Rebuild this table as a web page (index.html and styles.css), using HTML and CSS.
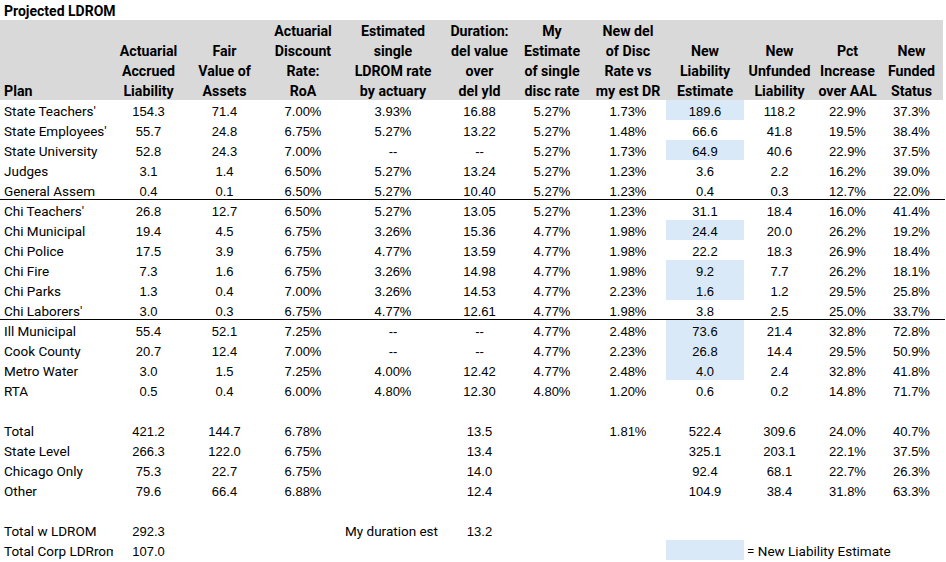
FILE: index.html
```html
<!DOCTYPE html>
<html lang="en">
<head>
<meta charset="utf-8">
<title>Projected LDROM</title>
<link rel="stylesheet" href="styles.css">
</head>
<body>
<div class="sheet">
  <div class="row"><div class="title">Projected LDROM</div></div>

  <div class="row head">
    <div class="h left"><div>Plan</div></div>
    <div class="h"><div>Actuarial<br>Accrued<br>Liability</div></div>
    <div class="h"><div>Fair<br>Value of<br>Assets</div></div>
    <div class="h"><div>Actuarial<br>Discount<br>Rate:<br>RoA</div></div>
    <div class="h"><div>Estimated<br>single<br>LDROM rate<br>by actuary</div></div>
    <div class="h"><div>Duration:<br>del value<br>over<br>del yld</div></div>
    <div class="h"><div>My<br>Estimate<br>of single<br>disc rate</div></div>
    <div class="h"><div>New del<br>of Disc<br>Rate vs<br>my est DR</div></div>
    <div class="h"><div>New<br>Liability<br>Estimate</div></div>
    <div class="h"><div>New<br>Unfunded<br>Liability</div></div>
    <div class="h"><div>Pct<br>Increase<br>over AAL</div></div>
    <div class="h"><div>New<br>Funded<br>Status</div></div>
  </div>

  <div class="row"><div class="lbl">State Teachers'</div><div class="n">154.3</div><div class="n">71.4</div><div class="n">7.00%</div><div class="n">3.93%</div><div class="n">16.88</div><div class="n">5.27%</div><div class="n">1.73%</div><div class="n hl">189.6</div><div class="n">118.2</div><div class="n">22.9%</div><div class="n">37.3%</div></div>
  <div class="row"><div class="lbl">State Employees'</div><div class="n">55.7</div><div class="n">24.8</div><div class="n">6.75%</div><div class="n">5.27%</div><div class="n">13.22</div><div class="n">5.27%</div><div class="n">1.48%</div><div class="n">66.6</div><div class="n">41.8</div><div class="n">19.5%</div><div class="n">38.4%</div></div>
  <div class="row"><div class="lbl">State University</div><div class="n">52.8</div><div class="n">24.3</div><div class="n">7.00%</div><div class="n">--</div><div class="n">--</div><div class="n">5.27%</div><div class="n">1.73%</div><div class="n hl">64.9</div><div class="n">40.6</div><div class="n">22.9%</div><div class="n">37.5%</div></div>
  <div class="row"><div class="lbl">Judges</div><div class="n">3.1</div><div class="n">1.4</div><div class="n">6.50%</div><div class="n">5.27%</div><div class="n">13.24</div><div class="n">5.27%</div><div class="n">1.23%</div><div class="n">3.6</div><div class="n">2.2</div><div class="n">16.2%</div><div class="n">39.0%</div></div>
  <div class="row sep"><div class="lbl">General Assem</div><div class="n">0.4</div><div class="n">0.1</div><div class="n">6.50%</div><div class="n">5.27%</div><div class="n">10.40</div><div class="n">5.27%</div><div class="n">1.23%</div><div class="n">0.4</div><div class="n">0.3</div><div class="n">12.7%</div><div class="n">22.0%</div></div>

  <div class="row"><div class="lbl">Chi Teachers'</div><div class="n">26.8</div><div class="n">12.7</div><div class="n">6.50%</div><div class="n">5.27%</div><div class="n">13.05</div><div class="n">5.27%</div><div class="n">1.23%</div><div class="n">31.1</div><div class="n">18.4</div><div class="n">16.0%</div><div class="n">41.4%</div></div>
  <div class="row"><div class="lbl">Chi Municipal</div><div class="n">19.4</div><div class="n">4.5</div><div class="n">6.75%</div><div class="n">3.26%</div><div class="n">15.36</div><div class="n">4.77%</div><div class="n">1.98%</div><div class="n hl">24.4</div><div class="n">20.0</div><div class="n">26.2%</div><div class="n">19.2%</div></div>
  <div class="row"><div class="lbl">Chi Police</div><div class="n">17.5</div><div class="n">3.9</div><div class="n">6.75%</div><div class="n">4.77%</div><div class="n">13.59</div><div class="n">4.77%</div><div class="n">1.98%</div><div class="n">22.2</div><div class="n">18.3</div><div class="n">26.9%</div><div class="n">18.4%</div></div>
  <div class="row"><div class="lbl">Chi Fire</div><div class="n">7.3</div><div class="n">1.6</div><div class="n">6.75%</div><div class="n">3.26%</div><div class="n">14.98</div><div class="n">4.77%</div><div class="n">1.98%</div><div class="n hl">9.2</div><div class="n">7.7</div><div class="n">26.2%</div><div class="n">18.1%</div></div>
  <div class="row"><div class="lbl">Chi Parks</div><div class="n">1.3</div><div class="n">0.4</div><div class="n">7.00%</div><div class="n">3.26%</div><div class="n">14.53</div><div class="n">4.77%</div><div class="n">2.23%</div><div class="n hl">1.6</div><div class="n">1.2</div><div class="n">29.5%</div><div class="n">25.8%</div></div>
  <div class="row sep"><div class="lbl">Chi Laborers'</div><div class="n">3.0</div><div class="n">0.3</div><div class="n">6.75%</div><div class="n">4.77%</div><div class="n">12.61</div><div class="n">4.77%</div><div class="n">1.98%</div><div class="n">3.8</div><div class="n">2.5</div><div class="n">25.0%</div><div class="n">33.7%</div></div>

  <div class="row"><div class="lbl">Ill Municipal</div><div class="n">55.4</div><div class="n">52.1</div><div class="n">7.25%</div><div class="n">--</div><div class="n">--</div><div class="n">4.77%</div><div class="n">2.48%</div><div class="n hl">73.6</div><div class="n">21.4</div><div class="n">32.8%</div><div class="n">72.8%</div></div>
  <div class="row"><div class="lbl">Cook County</div><div class="n">20.7</div><div class="n">12.4</div><div class="n">7.00%</div><div class="n">--</div><div class="n">--</div><div class="n">4.77%</div><div class="n">2.23%</div><div class="n hl">26.8</div><div class="n">14.4</div><div class="n">29.5%</div><div class="n">50.9%</div></div>
  <div class="row"><div class="lbl">Metro Water</div><div class="n">3.0</div><div class="n">1.5</div><div class="n">7.25%</div><div class="n">4.00%</div><div class="n">12.42</div><div class="n">4.77%</div><div class="n">2.48%</div><div class="n hl">4.0</div><div class="n">2.4</div><div class="n">32.8%</div><div class="n">41.8%</div></div>
  <div class="row"><div class="lbl">RTA</div><div class="n">0.5</div><div class="n">0.4</div><div class="n">6.00%</div><div class="n">4.80%</div><div class="n">12.30</div><div class="n">4.80%</div><div class="n">1.20%</div><div class="n">0.6</div><div class="n">0.2</div><div class="n">14.8%</div><div class="n">71.7%</div></div>
  <div class="row"></div>

  <div class="row"><div class="lbl">Total</div><div class="n">421.2</div><div class="n">144.7</div><div class="n">6.78%</div><div class="n"></div><div class="n">13.5</div><div class="n"></div><div class="n">1.81%</div><div class="n">522.4</div><div class="n">309.6</div><div class="n">24.0%</div><div class="n">40.7%</div></div>
  <div class="row"><div class="lbl">State Level</div><div class="n">266.3</div><div class="n">122.0</div><div class="n">6.75%</div><div class="n"></div><div class="n">13.4</div><div class="n"></div><div class="n"></div><div class="n">325.1</div><div class="n">203.1</div><div class="n">22.1%</div><div class="n">37.5%</div></div>
  <div class="row"><div class="lbl">Chicago Only</div><div class="n">75.3</div><div class="n">22.7</div><div class="n">6.75%</div><div class="n"></div><div class="n">14.0</div><div class="n"></div><div class="n"></div><div class="n">92.4</div><div class="n">68.1</div><div class="n">22.7%</div><div class="n">26.3%</div></div>
  <div class="row"><div class="lbl">Other</div><div class="n">79.6</div><div class="n">66.4</div><div class="n">6.88%</div><div class="n"></div><div class="n">12.4</div><div class="n"></div><div class="n"></div><div class="n">104.9</div><div class="n">38.4</div><div class="n">31.8%</div><div class="n">63.3%</div></div>
  <div class="row"></div>

  <div class="row"><div class="lbl">Total w LDROM</div><div class="n">292.3</div><div class="n"></div><div class="n"></div><div class="lbl">My duration est</div><div class="n">13.2</div></div>
  <div class="row"><div class="lbl">Total Corp LDRrom</div><div class="n">107.0</div><div class="n"></div><div class="n"></div><div class="n"></div><div class="n"></div><div class="n"></div><div class="n"></div><div class="n hl"></div><div class="lbl legend">= New Liability Estimate</div></div>
</div>
</body>
</html>
```

FILE: styles.css
```css
html, body {
  margin: 0;
  padding: 0;
  background: #ffffff;
}

.sheet {
  width: 946px;
  color: #000000;
  font-family: "Liberation Sans", Arial, sans-serif;
  font-size: 13px;
}

.row {
  display: grid;
  grid-template-columns: 113px 71px 81px 76px 104px 69px 76px 76px 78px 71px 65px 63px;
  height: 20px;
  width: 945px;
  box-sizing: border-box;
}

.row.sep {
  border-bottom: 1px solid #000000;
}

.title {
  grid-column: 1 / span 4;
  font-family: Roboto, "Liberation Sans", sans-serif;
  font-weight: 700;
  font-size: 14px;
  line-height: 17px;
  padding: 3px 0 0 4px;
  white-space: nowrap;
}

.row.head {
  height: 80px;
  width: 943px;
  background: #d9d9d9;
}

.h {
  display: flex;
  flex-direction: column;
  justify-content: flex-end;
  align-items: center;
  text-align: center;
  font-family: Roboto, "Liberation Sans", sans-serif;
  font-weight: 700;
  font-size: 14.2px;
  line-height: 20px;
  white-space: nowrap;
}

.h > div {
  margin-bottom: -1px;
}

.h.left {
  align-items: flex-start;
  text-align: left;
  padding-left: 4px;
}

.lbl {
  font-family: Roboto, "Liberation Sans", sans-serif;
  font-size: 13.5px;
  line-height: 17px;
  padding: 3px 0 0 4px;
  white-space: nowrap;
  overflow: hidden;
}

.n {
  text-align: center;
  line-height: 16px;
  padding-top: 4px;
  white-space: nowrap;
}

.hl {
  background: #dae9f8;
}

.legend {
  grid-column: span 3;
  padding-left: 3px;
}
```
